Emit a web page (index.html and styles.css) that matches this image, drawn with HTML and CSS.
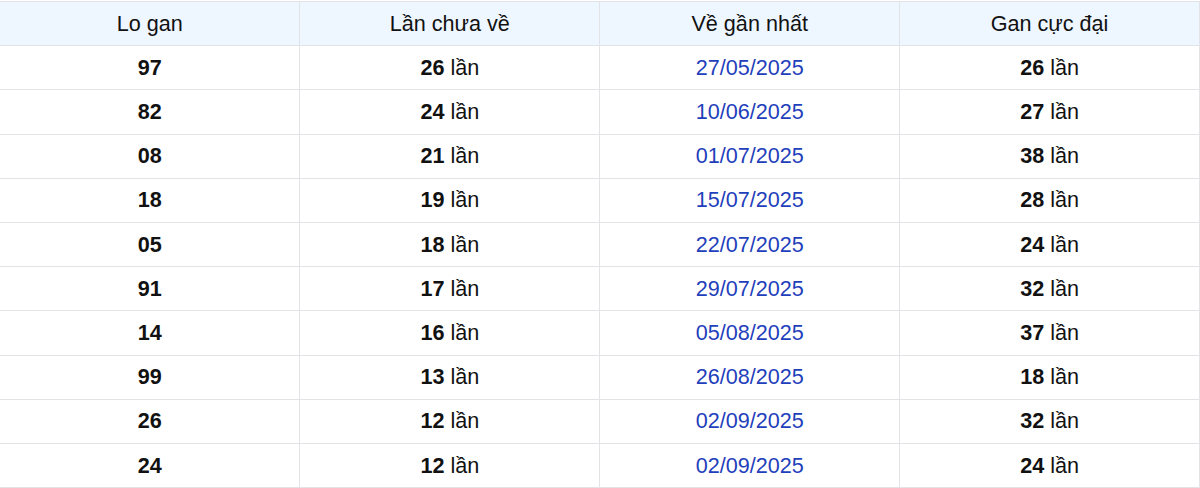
FILE: index.html
```html
<!DOCTYPE html>
<html lang="vi">
<head>
<meta charset="utf-8">
<title>Lo gan</title>
<link rel="stylesheet" href="styles.css">
</head>
<body>
<table class="gan-table">
  <thead>
    <tr>
      <th>Lo gan</th>
      <th>Lần chưa về</th>
      <th>Về gần nhất</th>
      <th>Gan cực đại</th>
    </tr>
  </thead>
  <tbody>
    <tr><td><b>97</b></td><td><b>26</b> lần</td><td class="date">27/05/2025</td><td><b>26</b> lần</td></tr>
    <tr><td><b>82</b></td><td><b>24</b> lần</td><td class="date">10/06/2025</td><td><b>27</b> lần</td></tr>
    <tr><td><b>08</b></td><td><b>21</b> lần</td><td class="date">01/07/2025</td><td><b>38</b> lần</td></tr>
    <tr><td><b>18</b></td><td><b>19</b> lần</td><td class="date">15/07/2025</td><td><b>28</b> lần</td></tr>
    <tr><td><b>05</b></td><td><b>18</b> lần</td><td class="date">22/07/2025</td><td><b>24</b> lần</td></tr>
    <tr><td><b>91</b></td><td><b>17</b> lần</td><td class="date">29/07/2025</td><td><b>32</b> lần</td></tr>
    <tr><td><b>14</b></td><td><b>16</b> lần</td><td class="date">05/08/2025</td><td><b>37</b> lần</td></tr>
    <tr><td><b>99</b></td><td><b>13</b> lần</td><td class="date">26/08/2025</td><td><b>18</b> lần</td></tr>
    <tr><td><b>26</b></td><td><b>12</b> lần</td><td class="date">02/09/2025</td><td><b>32</b> lần</td></tr>
    <tr><td><b>24</b></td><td><b>12</b> lần</td><td class="date">02/09/2025</td><td><b>24</b> lần</td></tr>
  </tbody>
</table>
</body>
</html>
```

FILE: styles.css
```css
html, body {
  margin: 0;
  padding: 0;
  background: #ffffff;
}

body {
  font-family: "Liberation Sans", Arial, sans-serif;
  font-size: 21.6px;
  color: #111111;
  padding-top: 1px;
}

.gan-table {
  width: 1200px;
  border-collapse: collapse;
  table-layout: fixed;
}

.gan-table th,
.gan-table td {
  height: 43.2px;
  padding: 0;
  text-align: center;
  vertical-align: middle;
  border: 1.2px solid #e1e3e7;
  line-height: 1.2;
}

.gan-table th {
  font-weight: normal;
  background: #eef6ff;
}

.gan-table tr > :first-child {
  border-left: none;
}

.gan-table b {
  font-weight: bold;
}

.gan-table .date {
  color: #1f40bb;
}
```
